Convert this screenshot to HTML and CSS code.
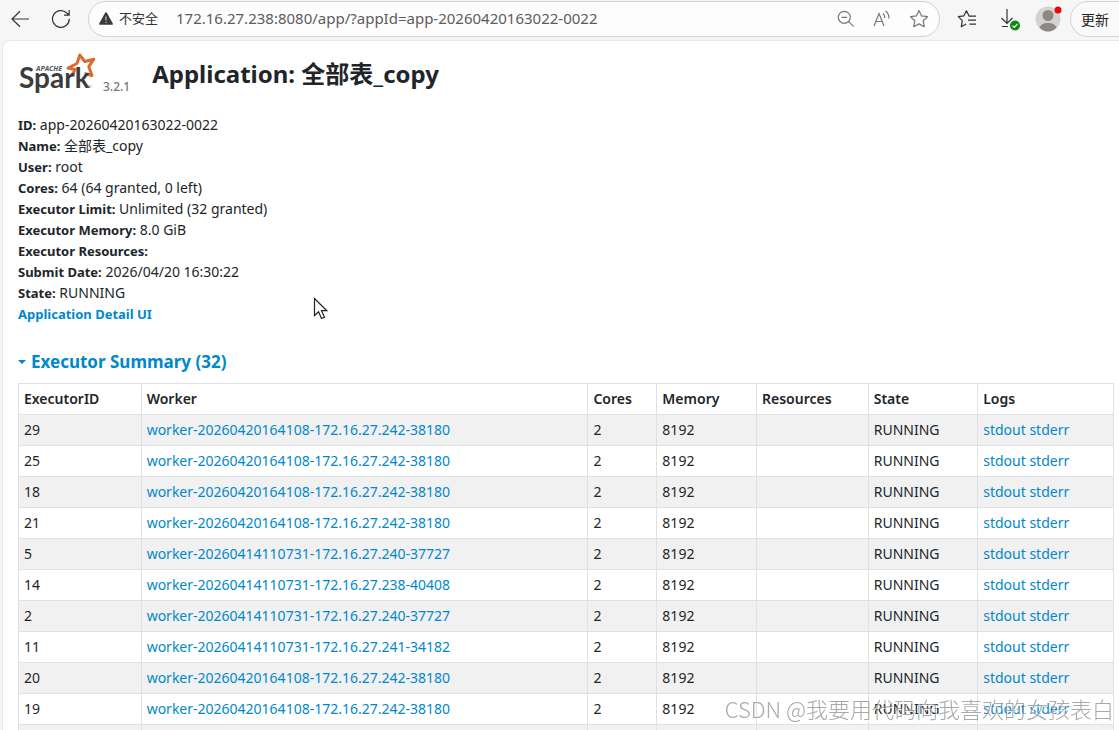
FILE: index.html
```html
<!DOCTYPE html>
<html lang="zh-CN">
<head>
<meta charset="utf-8">
<title>Application: 全部表_copy</title>
<link rel="stylesheet" href="styles.css">
</head>
<body>
<header class="toolbar">
  <button class="tool back" type="button" aria-label="返回">
    <svg width="20" height="20" viewBox="0 0 20 20"><path d="M19 10H2M10 2.2L2 10l8 7.8"/></svg>
  </button>
  <button class="tool reload" type="button" aria-label="刷新">
    <svg width="20" height="20" viewBox="0 0 20 20"><path d="M18.3 9.8A8.4 8.4 0 1 1 15.8 4L18 6M18.2 1v5.2H13"/></svg>
  </button>
  <div class="address">
    <svg class="warn" width="14" height="13" viewBox="0 0 14 13"><path d="M7 .3c.5 0 .8.2 1 .6l5.7 10.4c.4.8 0 1.5-.9 1.5H1.200c-.9 0-1.300-.7-.9-1.500L6 .9c.2-.4.5-.6 1-.6z" fill="#3b3b3b" stroke="none"/><path d="M7 4.500v4M7 9.700v1.300" stroke="#bbb" stroke-width="1.200"/></svg>
    <span class="insecure">不安全</span>
    <input class="url" type="text" aria-label="地址" value="172.16.27.238:8080/app/?appId=app-20260420163022-0022">
    <button class="tool" type="button" aria-label="缩小">
      <svg width="18" height="18" viewBox="0 0 18 18"><path d="M7.300 1.300a6 6 0 1 1 0 12 6 6 0 0 1 0-12zM4.500 7.300h5.600M11.700 11.700l5 5"/></svg>
    </button>
    <button class="tool" type="button" aria-label="朗读">
      <svg width="18" height="18" viewBox="0 0 18 18"><path d="M1 16L6 3.500 11 16M3 11.500h6.200M10 3.500c1.300 1 1.900 2.300 1.800 4.500M12.500 1c2.500 1.800 3.600 4 3.400 7.500"/></svg>
    </button>
    <button class="tool" type="button" aria-label="收藏">
      <svg width="20" height="20" viewBox="0 0 20 20"><path stroke-linejoin="round" d="M10 1.500l2.600 5.400 5.900.8-4.300 4.100 1.100 5.900L10 14.900l-5.300 2.800 1.100-5.900L1.500 7.700l5.900-.8z"/></svg>
    </button>
  </div>
  <button class="tool dark favs" type="button" aria-label="收藏夹">
    <svg width="20" height="20" viewBox="0 0 20 20"><path stroke-linejoin="round" d="M12 6.700L9.400 1.700 6.800 6.900l-5.500.8 4 4-1 6 4.800-2.800M11.500 7.200h7.500M11 11.200h8M12.500 15.200h6.500"/></svg>
  </button>
  <button class="tool dark download" type="button" aria-label="下载">
    <svg width="20" height="24" viewBox="0 0 20 24"><path d="M7 2v14M1.500 11L7 16.500l5.500-5.500M2 19.500h6"/><circle cx="15" cy="18.500" r="5" fill="#128712" stroke="none"/><path d="M12.600 18.600l1.700 1.700 3.200-3.400" stroke="#fff"/></svg>
  </button>
  <button class="tool profile" type="button" aria-label="个人资料">
    <svg width="28" height="28" viewBox="0 0 28 28"><g stroke="none"><circle cx="13" cy="14" r="12.500" fill="#d5d3d1"/><circle cx="13" cy="10.500" r="5.500" fill="#8b8785"/><path d="M4.500 22.800c1.200-3.400 4.400-4.800 8.500-4.800s7.300 1.400 8.500 4.800c-2.200 2.300-5 3.700-8.500 3.700s-6.300-1.400-8.500-3.700z" fill="#8b8785"/><circle cx="23" cy="5" r="3.500" fill="#ed0808"/></g></svg>
  </button>
  <button class="update" type="button">更新</button>
</header>

<main class="page">
  <div class="title-row">
    <a class="brand" href="#" aria-label="Apache Spark">
      <svg width="80" height="46" viewBox="0 0 80 46">
        <path d="M54 24L57 18.500l-7-1.500 9-4.500 2.800-8.500 5 6.500 9-2.300-5 7.500 3.200 8.800-7.500-2" fill="#fff" stroke="#dd6a2f" stroke-width="3" stroke-linejoin="round"/>
        <text class="logo-apache" x="18" y="20">APACHE</text>
        <text class="logo-spark" x="1" y="37">Spark</text>
        <text class="logo-tm" x="69" y="37">TM</text>
      </svg>
      <span class="version">3.2.1</span>
    </a>
    <h1>Application: 全部表_copy</h1>
  </div>

  <ul class="facts">
    <li><strong>ID:</strong> app-20260420163022-0022</li>
    <li><strong>Name:</strong> 全部表_copy</li>
    <li><strong>User:</strong> root</li>
    <li><strong>Cores:</strong> 64 (64 granted, 0 left)</li>
    <li><strong>Executor Limit:</strong> Unlimited (32 granted)</li>
    <li><strong>Executor Memory:</strong> 8.0 GiB</li>
    <li><strong>Executor Resources:</strong></li>
    <li><strong>Submit Date:</strong> 2026/04/20 16:30:22</li>
    <li><strong>State:</strong> RUNNING</li>
    <li><strong><a href="#">Application Detail UI</a></strong></li>
  </ul>

  <h2><a href="#executors"><span class="caret"></span>Executor Summary (32)</a></h2>

  <table class="executors" id="executors">
    <colgroup><col class="c-id"><col class="c-worker"><col class="c-cores"><col class="c-memory"><col class="c-resources"><col class="c-state"><col></colgroup>
    <thead>
      <tr><th>ExecutorID</th><th>Worker</th><th>Cores</th><th>Memory</th><th>Resources</th><th>State</th><th>Logs</th></tr>
    </thead>
    <tbody>
      <tr><td>29</td><td><a href="#">worker-20260420164108-172.16.27.242-38180</a></td><td>2</td><td>8192</td><td></td><td>RUNNING</td><td><a href="#">stdout</a> <a href="#">stderr</a></td></tr>
      <tr><td>25</td><td><a href="#">worker-20260420164108-172.16.27.242-38180</a></td><td>2</td><td>8192</td><td></td><td>RUNNING</td><td><a href="#">stdout</a> <a href="#">stderr</a></td></tr>
      <tr><td>18</td><td><a href="#">worker-20260420164108-172.16.27.242-38180</a></td><td>2</td><td>8192</td><td></td><td>RUNNING</td><td><a href="#">stdout</a> <a href="#">stderr</a></td></tr>
      <tr><td>21</td><td><a href="#">worker-20260420164108-172.16.27.242-38180</a></td><td>2</td><td>8192</td><td></td><td>RUNNING</td><td><a href="#">stdout</a> <a href="#">stderr</a></td></tr>
      <tr><td>5</td><td><a href="#">worker-20260414110731-172.16.27.240-37727</a></td><td>2</td><td>8192</td><td></td><td>RUNNING</td><td><a href="#">stdout</a> <a href="#">stderr</a></td></tr>
      <tr><td>14</td><td><a href="#">worker-20260414110731-172.16.27.238-40408</a></td><td>2</td><td>8192</td><td></td><td>RUNNING</td><td><a href="#">stdout</a> <a href="#">stderr</a></td></tr>
      <tr><td>2</td><td><a href="#">worker-20260414110731-172.16.27.240-37727</a></td><td>2</td><td>8192</td><td></td><td>RUNNING</td><td><a href="#">stdout</a> <a href="#">stderr</a></td></tr>
      <tr><td>11</td><td><a href="#">worker-20260414110731-172.16.27.241-34182</a></td><td>2</td><td>8192</td><td></td><td>RUNNING</td><td><a href="#">stdout</a> <a href="#">stderr</a></td></tr>
      <tr><td>20</td><td><a href="#">worker-20260420164108-172.16.27.242-38180</a></td><td>2</td><td>8192</td><td></td><td>RUNNING</td><td><a href="#">stdout</a> <a href="#">stderr</a></td></tr>
      <tr><td>19</td><td><a href="#">worker-20260420164108-172.16.27.242-38180</a></td><td>2</td><td>8192</td><td></td><td>RUNNING</td><td><a href="#">stdout</a> <a href="#">stderr</a></td></tr>
      <tr><td></td><td></td><td></td><td></td><td></td><td></td><td></td></tr>
    </tbody>
  </table>
</main>

<div class="watermark">CSDN @我要用代码向我喜欢的女孩表白</div>
<svg class="pointer" width="16" height="24" viewBox="0 0 16 24" aria-hidden="true"><path d="M1.500 1.500v17l4-3.800 3 6.800 3-1.300-3-6.500h5.300z" fill="#fff" stroke="#222" stroke-width="1.200"/></svg>
</body>
</html>
```

FILE: styles.css
```css
* {
  box-sizing: border-box;
}

body {
  display: flex;
  flex-direction: column;
  height: 100vh;
  margin: 0;
  overflow: hidden;
  background: #f6f6f6;
  color: #212529;
  font: 14px/21px "Noto Sans", "Noto Sans CJK SC", sans-serif;
}

a {
  color: #0088cc;
  text-decoration: none;
}

/* Browser toolbar */
.toolbar {
  display: flex;
  flex: none;
  align-items: center;
  height: 40px;
  padding: 0 0 3px 10px;
}

.tool {
  display: flex;
  flex: none;
  padding: 0;
  border: 0;
  background: none;
}

.tool svg {
  fill: none;
  stroke: #777;
  stroke-width: 1.2;
}

.back svg,
.reload svg,
.dark svg {
  stroke: #333;
}

.reload {
  margin: 0 17px 0 21px;
}

.address {
  display: flex;
  flex: 1;
  align-items: center;
  gap: 18px;
  min-width: 0;
  height: 36px;
  padding: 0 10px;
  border: 1px solid #d2d2d2;
  border-radius: 18px;
  background: #fdfdfd;
}

.warn {
  flex: none;
  margin-right: -12px;
}

.insecure {
  flex: none;
  color: #333;
  font-size: 13px;
}

.url {
  flex: 1;
  min-width: 0;
  padding: 0;
  border: 0;
  outline: 0;
  background: none;
  color: #5c5c5c;
  font: inherit;
  font-size: 15px;
}

.favs {
  margin-left: 17px;
}

.download {
  margin: 0 15px 0 23px;
}

.update {
  flex: none;
  width: 57px;
  height: 36px;
  margin: 0 -8px 0 7px;
  padding: 0 0 0 10px;
  border: 1px solid #d2d2d2;
  border-radius: 18px 0 0 18px;
  background: #fafafa;
  color: #222;
  font: 14px "Noto Sans CJK SC", sans-serif;
  text-align: left;
}

/* Application page */
.page {
  flex: 1;
  min-height: 0;
  margin-left: 2px;
  padding: 10px 5px 0 15px;
  overflow: hidden;
  border: 1px solid #e8e8e8;
  border-width: 1px 0 0 1px;
  border-radius: 8px 0 0;
  background: #fff;
}

.title-row {
  display: flex;
  align-items: center;
  gap: 22px;
  height: 46px;
}

.brand {
  display: flex;
  align-items: flex-end;
  gap: 5px;
}

.logo-apache {
  fill: #555;
  font: italic 700 7px "Open Sans", sans-serif;
}

.logo-spark {
  fill: #3c3c3c;
  font: 700 28px Lato, sans-serif;
}

.logo-tm {
  fill: #888;
  font: 3px "Open Sans", sans-serif;
}

.version {
  color: #777;
  font-size: 12px;
  font-weight: 500;
}

h1 {
  margin: 0;
  font-size: 24px;
  font-weight: 700;
  line-height: 32px;
}

.facts {
  margin: 17px 0 0;
  padding: 0;
  list-style: none;
}

.facts strong {
  font-size: 13px;
  font-weight: 700;
  line-height: 1;
}

h2 {
  margin: 26px 0 9px;
  font-size: 17px;
  font-weight: 700;
  line-height: 24px;
}

h2 a {
  display: flex;
  align-items: center;
  gap: 5px;
}

.caret {
  border: 4px solid transparent;
  border-top-color: #0088cc;
  border-bottom: 0;
}

.executors {
  width: 100%;
  border-collapse: collapse;
  table-layout: fixed;
}

.c-id { width: 11.2%; }
.c-worker { width: 40.8%; }
.c-cores { width: 6.3%; }
.c-memory { width: 9.1%; }
.c-resources { width: 10.2%; }
.c-state { width: 10%; }

.executors th,
.executors td {
  height: 31px;
  padding: 0 5px 2px;
  border: 1px solid #dee2e6;
  text-align: left;
  white-space: nowrap;
}

.executors th {
  font-weight: 600;
}

.executors tbody tr:nth-child(odd) {
  background: #f1f1f1;
}

/* Overlays */
.watermark {
  position: fixed;
  right: 5px;
  bottom: 6px;
  color: rgba(140, 140, 140, 0.75);
  font: 300 22px/32px "Noto Sans CJK SC", sans-serif;
  text-shadow: 1px 1px 0 rgba(255, 255, 255, 0.8);
  pointer-events: none;
}

.pointer {
  position: fixed;
  left: 313px;
  top: 297px;
  pointer-events: none;
}
```
